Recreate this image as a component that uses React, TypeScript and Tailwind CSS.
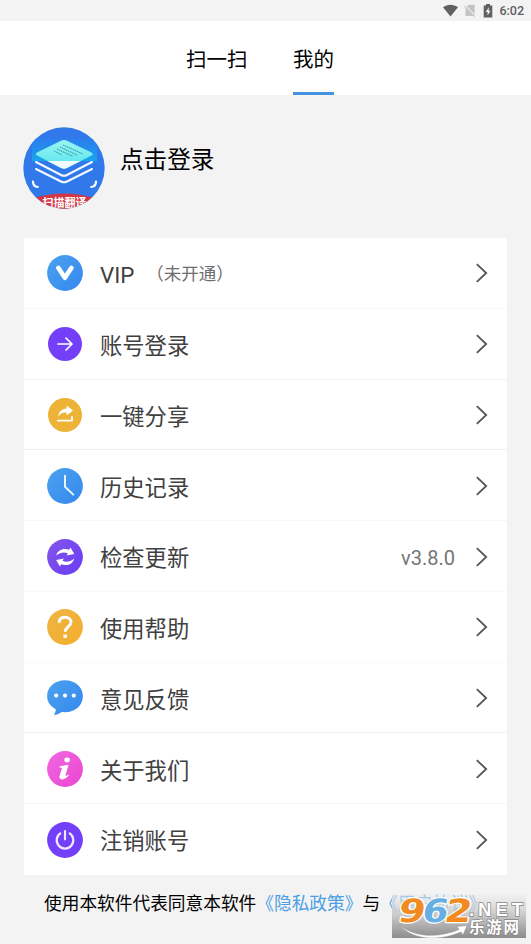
import type { ReactNode } from "react";

type Row = {
  label: string;
  icon: ReactNode;
  note?: string;
  value?: string;
  divider?: string;
};

const Disc = ({ fill, small }: { fill: string; small?: boolean }) => (
  <circle cx="18" cy="18" r={small ? 17 : 17.9} fill={fill} />
);

const rows: Row[] = [
  {
    label: "VIP",
    note: "（未开通）",
    divider: "border-[#f8f8f8]",
    icon: (
      <>
        <Disc fill="url(#blue)" />
        <path d="M11.3 12.8 17.9 22.8 24.5 12.8" fill="none" stroke="#fff" strokeWidth="4.6" strokeLinecap="round" strokeLinejoin="round" />
      </>
    ),
  },
  {
    label: "账号登录",
    divider: "border-[#f3f3f5]",
    icon: (
      <>
        <Disc fill="#743ff9" small />
        <path d="M11 18H25M19 12.2 25 18 19 24" fill="none" stroke="#fff" strokeWidth="1.7" strokeLinecap="round" strokeLinejoin="round" />
      </>
    ),
  },
  {
    label: "一键分享",
    divider: "border-[#f0f1f6]",
    icon: (
      <>
        <Disc fill="#edb336" small />
        <path d="M11.3 19.6C11.6 14.8 14.8 11.8 19.6 11.5V8.6L26 13.6 19.6 18.6V15.5C15.8 15.2 13 16.5 11.3 19.6Z" fill="#fff" />
        <path d="M10.8 23.6H25V19.8" fill="none" stroke="#fff" strokeWidth="1.8" strokeLinecap="round" strokeLinejoin="round" />
      </>
    ),
  },
  {
    label: "历史记录",
    divider: "border-[#f6f6f6]",
    icon: (
      <>
        <Disc fill="url(#blue)" />
        <path d="M18 7.8V18.7L26.3 26.6" fill="none" stroke="#e9f4ff" strokeWidth="2" strokeLinecap="round" strokeLinejoin="round" />
      </>
    ),
  },
  {
    label: "检查更新",
    value: "v3.8.0",
    divider: "border-[#fafafa]",
    icon: (
      <>
        <Disc fill="url(#purple)" />
        <path d="M9.2 16.6C10.4 11 16.6 8.6 22.2 10.8L23.4 8.6 27.3 15 19.6 16.6 20.9 14.3C17 12.6 13 13.2 9.2 16.6Z" fill="#fff" />
        <path d="M27.2 19.5C26 25.1 19.8 27.5 14.2 25.3L13 27.5 9.1 21.1 16.8 19.5 15.5 21.8C19.4 23.5 23.4 22.9 27.2 19.5Z" fill="#fff" />
      </>
    ),
  },
  {
    label: "使用帮助",
    divider: "border-[#fafafa]",
    icon: (
      <>
        <Disc fill="url(#amber)" />
        <path d="M12.2 13.8C12.2 10.3 14.5 8.2 18 8.2S24 10.3 24 13.3C24 17.3 18.2 18 18.2 22.7" fill="none" stroke="#fff" strokeWidth="2.9" />
        <rect x="16.4" y="25.6" width="3.5" height="3.3" fill="#fff" />
      </>
    ),
  },
  {
    label: "意见反馈",
    divider: "border-[#f1f1f1]",
    icon: (
      <>
        <path d="M18 .3C8 .3.1 6.9.1 16 .1 21.8 3.4 26.5 8.8 29.2 8.7 31.3 8.1 33.3 6.8 35.1 9.8 34.7 12.7 33.5 14.8 32 27 33.3 35.9 26.1 35.9 16.2 35.9 6.9 28 .3 18 .3Z" fill="url(#blue)" />
        <circle cx="9.2" cy="15.6" r="2.1" fill="#fff" />
        <circle cx="18" cy="15.6" r="2.1" fill="#fff" />
        <circle cx="26.8" cy="15.6" r="2.1" fill="#fff" />
      </>
    ),
  },
  {
    label: "关于我们",
    divider: "border-[#f6f6f6]",
    icon: (
      <>
        <Disc fill="url(#pink)" />
        <ellipse cx="20.1" cy="9" rx="2.8" ry="2.4" fill="#fff" />
        <path d="M12.6 15.2 21.6 13.7 18.6 24C18.2 25.5 19.4 25 21.4 23.2L21.8 24.5C18.7 27.8 16 28.8 14.1 28.3 12.2 27.7 12.2 26 12.7 24.3L14.9 17.3C15.1 16.5 14.3 16.4 12.4 16.7Z" fill="#fff" />
      </>
    ),
  },
  {
    label: "注销账号",
    icon: (
      <>
        <Disc fill="#743ff9" />
        <path d="M13.3 11.4A8.3 8.3 0 1 0 22.7 11.4M18 9V17.3" fill="none" stroke="#eee9ff" strokeWidth="2.2" strokeLinecap="round" />
      </>
    ),
  },
];

function Gradients() {
  return (
    <svg className="absolute size-0" aria-hidden="true">
      <defs>
        <linearGradient id="blue" x1="0" y1="0" x2="1" y2="1">
          <stop stopColor="#4aa3ee" />
          <stop offset="1" stopColor="#3587ef" />
        </linearGradient>
        <linearGradient id="purple" x1="0" y1="0" x2="1" y2="1">
          <stop stopColor="#8355ea" />
          <stop offset="1" stopColor="#6b3cf5" />
        </linearGradient>
        <linearGradient id="amber" x1="0" y1="0" x2="1" y2="1">
          <stop stopColor="#eeb443" />
          <stop offset="1" stopColor="#f4ae2c" />
        </linearGradient>
        <linearGradient id="pink" x1="0" y1="0" x2="1" y2="1">
          <stop stopColor="#ef68e0" />
          <stop offset="1" stopColor="#eb45d2" />
        </linearGradient>
      </defs>
    </svg>
  );
}

function StatusBar() {
  return (
    <div className="flex h-[21px] shrink-0 items-center justify-end pr-[7px] text-[#606060]">
      <svg className="mr-[6px] h-[13px] w-[15px]" viewBox="0 0 15 13">
        <path d="M0 3.3C4.2-.2 10.8-.2 15 3.3L7.5 12.6Z" fill="currentColor" />
      </svg>
      <svg className="mr-[7px] h-[13px] w-[12px]" viewBox="0 0 12 13">
        <path d="M4.4.8H10.7V12H1.5V3.7Z" fill="#c3c3c3" />
        <path d="M.2 1.2 11.4 12.4" stroke="#f3f3f3" strokeWidth="2.2" />
        <path d="M.4 2 11 12.6" stroke="#aaa" strokeWidth="1" />
      </svg>
      <svg className="mr-[6px] h-[14px] w-[10px]" viewBox="0 0 10 14">
        <path d="M3 0H7V1.4H9.3V13.6H.7V1.4H3Z" fill="currentColor" />
        <path d="M5.7 3.3 2.7 8H4.6V11.5L7.5 6.7H5.7Z" fill="#f3f3f3" />
      </svg>
      <span className="mt-px text-[12.5px] leading-none font-medium">6:02</span>
    </div>
  );
}

function AppLogo() {
  return (
    <svg className="size-[82px] shrink-0" viewBox="0 0 82 82">
      <defs>
        <clipPath id="avatar">
          <circle cx="41" cy="41" r="40.7" />
        </clipPath>
        <linearGradient id="scan" x1="0" y1="0" x2="0" y2="1">
          <stop stopColor="#1f8df0" stopOpacity="0.3" />
          <stop offset="1" stopColor="#18a8ee" />
        </linearGradient>
        <linearGradient id="sheet" x1="0" y1="0" x2="0" y2="1">
          <stop stopColor="#9af5f1" />
          <stop offset="1" stopColor="#54e5ee" />
        </linearGradient>
      </defs>
      <g clipPath="url(#avatar)">
        <rect width="82" height="82" fill="#3179eb" />
        <rect x="9" y="12" width="65" height="22" fill="url(#scan)" />
        <path d="M14 25.5 38 13.8Q41 12.4 44 13.8L68.5 25.5Q71 27 68.5 28.5L44 41Q41 42.5 38 41L14 28.5Q11.5 27 14 25.5Z" fill="url(#sheet)" />
        <path d="M24.4 34H57.6L44 41Q41 42.5 38 41Z" fill="#edfbff" />
        <path d="m40 18 20 9M37 20 55 28.5M34 22 50 29.5M31 24 39 28" stroke="#288b99" strokeWidth="0.9" strokeDasharray="1.6 .6" />
        <path d="M13 35 38 48Q41 49.5 44 48L69 35M13 42 38 54.5Q41 56 44 54.5L69 42" fill="none" stroke="#f2fbff" strokeWidth="2" strokeLinecap="round" />
        <path d="M10 54.5Q10 59.5 14.8 60M73 54.5Q73 59.5 68.2 60" fill="none" stroke="#fff" strokeWidth="2.2" strokeLinecap="round" />
        <ellipse cx="41" cy="82" rx="42" ry="15.5" fill="#d33745" />
        <text x="19.5" y="80" textLength="44" fontSize="11" fontWeight="700" fill="#fff">
          扫描翻译
        </text>
      </g>
    </svg>
  );
}

function MenuRow({ label, icon, note, value, divider }: Row) {
  return (
    <li className={`flex flex-1 items-center border-b pt-px pr-[19px] pl-[23px] ${divider ?? "border-transparent"}`}>
      <svg className="size-[36px] shrink-0 overflow-visible" viewBox="0 0 36 36">
        {icon}
      </svg>
      <span className="mt-[4px] ml-[17px] text-[22.3px] leading-none text-[#404040]">{label}</span>
      {note && <span className="mt-[2px] ml-[12px] text-[17.5px] leading-none text-[#6e6e6e]">{note}</span>}
      {value && <span className="mt-[3px] ml-auto text-[20px] leading-none text-[#757575]">{value}</span>}
      <svg className={`h-[20px] w-[13px] ${value ? "ml-[20px]" : "ml-auto"}`} viewBox="0 0 13 20">
        <path d="M1.8 1.2 11.2 10 1.8 18.8" fill="none" stroke="#555" strokeWidth="1.8" />
      </svg>
    </li>
  );
}

function Watermark() {
  return (
    <svg className="absolute top-[894px] left-[392px] h-[44px] w-[134px]" viewBox="0 0 134 44">
      <defs>
        <linearGradient id="plate" x1="0" y1="0" x2="0" y2="1">
          <stop stopColor="#ededed" stopOpacity="0.5" />
          <stop offset="0.5" stopColor="#c4c4c4" stopOpacity="0.94" />
          <stop offset="1" stopColor="#8c8c8c" />
        </linearGradient>
      </defs>
      <rect width="134" height="44" fill="url(#plate)" />
      <g fontFamily="'DejaVu Sans', sans-serif" fontWeight="700" fontSize="32" stroke="#fff" strokeWidth="2.4" strokeLinejoin="round" paintOrder="stroke" transform="translate(5 0) skewX(-10)">
        <text x="4.5" y="27.5" textLength="27" lengthAdjust="spacingAndGlyphs" fill="#f18a20">9</text>
        <text x="28.5" y="27.5" textLength="26" lengthAdjust="spacingAndGlyphs" fill="#65afe2">6</text>
        <text x="51" y="27.5" textLength="27" lengthAdjust="spacingAndGlyphs" fill="#f18a20">2</text>
      </g>
      <text x="77" y="21.5" fontFamily="'Liberation Sans', sans-serif" fontWeight="700" fontSize="18.5" textLength="54" fill="#fff" stroke="#898989" strokeWidth="1.5" paintOrder="stroke">.NET</text>
      <path d="M7 31C25 45 49 43 67 35.5L65 32.5 75 31.5 71 41 69 38C48 47 22 47 7 31Z" fill="#fff" stroke="#929292" strokeWidth="0.5" />
      <text x="77" y="39" fontSize="15.5" fontWeight="700" textLength="50" fill="#fff" stroke="#858585" strokeWidth="1.3" paintOrder="stroke">
        乐游网
      </text>
    </svg>
  );
}

export default function App() {
  return (
    <div className="relative flex h-[944px] w-[531px] flex-col overflow-hidden bg-[#f3f3f3] font-[Roboto,'Noto_Sans_CJK_SC',sans-serif] text-black">
      <Gradients />
      <StatusBar />

      <nav className="flex h-[74px] shrink-0 gap-[45.5px] bg-white pl-[186px] text-[20.5px]">
        <button type="button" className="h-full border-b-3 border-transparent pt-[7px]">扫一扫</button>
        <button type="button" className="h-full border-b-3 border-[#4393e1] pt-[7px]">我的</button>
      </nav>

      <header className="flex h-[143px] shrink-0 items-start gap-[15px] pt-[32px] pl-[23px]">
        <AppLogo />
        <h1 className="mt-[22px] text-[23.6px] leading-none">点击登录</h1>
      </header>

      <ul className="mx-6 flex h-[637px] w-[483px] shrink-0 flex-col bg-white">
        {rows.map((row) => (
          <MenuRow key={row.label} {...row} />
        ))}
      </ul>

      <p className="mt-[21px] pl-[44px] text-[17.7px] leading-none whitespace-nowrap">
        使用本软件代表同意本软件
        <a className="text-[#4c9ee5]">《隐私政策》</a>与<a className="text-[#4c9ee5]">《用户协议》</a>
      </p>

      <Watermark />
    </div>
  );
}
